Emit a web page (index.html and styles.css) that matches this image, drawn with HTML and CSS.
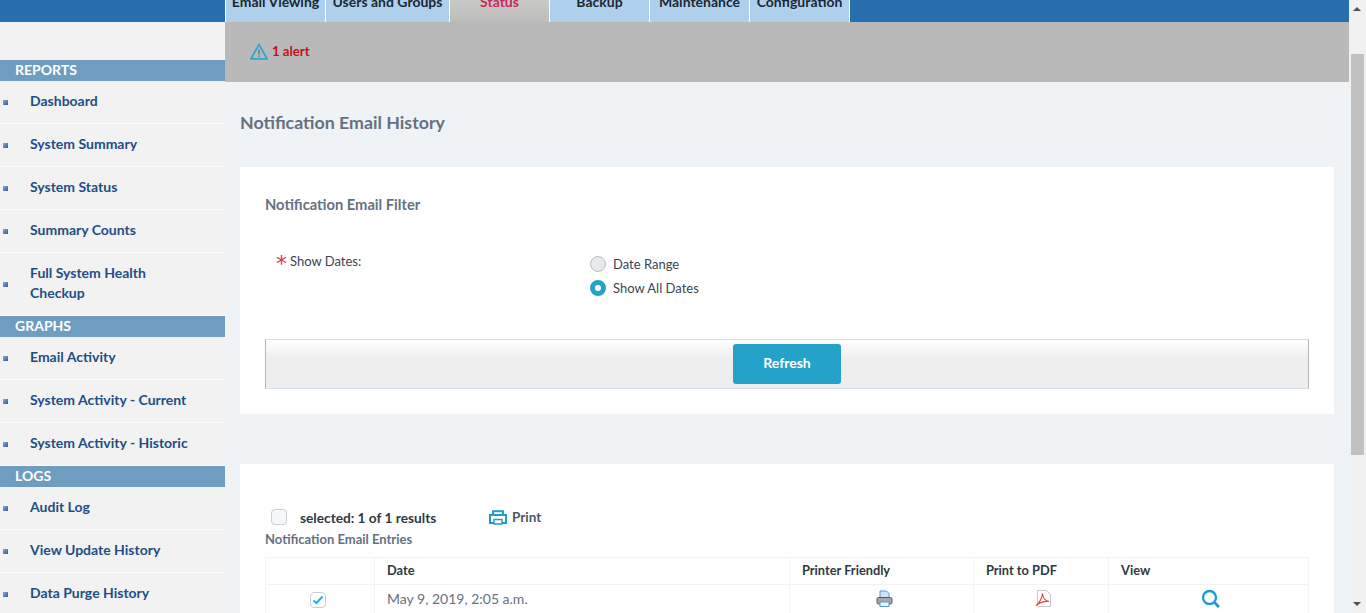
FILE: index.html
```html
<!DOCTYPE html>
<html>
<head>
	<title>Notification Email History</title>
	<link rel="stylesheet" href="styles.css">
</head>
<body>
<div class="app">
	<div class="page">
		<div class="topbar">
			<a class="tab">Email Viewing</a>
			<a class="tab tab-wide">Users and Groups</a>
			<a class="tab tab-active">Status</a>
			<a class="tab">Backup</a>
			<a class="tab">Maintenance</a>
			<a class="tab">Configuration</a>
		</div>
		<div class="layout">
			<div class="sidebar">
				<div class="side-head">REPORTS</div>
				<a class="side-item">Dashboard</a>
				<a class="side-item">System Summary</a>
				<a class="side-item">System Status</a>
				<a class="side-item">Summary Counts</a>
				<a class="side-item">Full System Health<br>Checkup</a>
				<div class="side-head">GRAPHS</div>
				<a class="side-item">Email Activity</a>
				<a class="side-item">System Activity - Current</a>
				<a class="side-item">System Activity - Historic</a>
				<div class="side-head">LOGS</div>
				<a class="side-item">Audit Log</a>
				<a class="side-item">View Update History</a>
				<a class="side-item">Data Purge History</a>
			</div>
			<div class="main">
				<div class="alert-bar">
					<svg class="alert-icon" width="18" height="17" viewBox="0 0 18 17">
						<path d="M9 1.5 L17 15.8 H1 Z" fill="none" stroke="#2ea6cf" stroke-width="1.7"/>
						<path d="M9 6.5 V11.5 M9 12.5 V14" stroke="#3b6f8a" stroke-width="1.2"/>
					</svg>
					<span class="alert-text">1 alert</span>
				</div>
				<h1 class="page-title">Notification Email History</h1>
				<div class="card card-filter">
					<h2 class="card-title">Notification Email Filter</h2>
					<div class="form-row">
						<div class="form-label"><span class="required">*</span>Show Dates:</div>
						<div class="radio-list">
							<label class="radio-row"><span class="radio"></span>Date Range</label>
							<label class="radio-row"><span class="radio radio-on"></span>Show All Dates</label>
						</div>
					</div>
					<div class="button-bar"><button class="refresh">Refresh</button></div>
				</div>
				<div class="card card-entries">
					<div class="select-row">
						<span class="check"></span>
						<span class="select-text">selected: 1 of 1 results</span>
						<a class="print-link">
							<svg width="18" height="15" viewBox="0 0 18 15">
								<path d="M4 5 V1.2 H14 V5" fill="none" stroke="#1f9dc8" stroke-width="2"/>
								<path d="M1 5 H17 V13 H1 Z" fill="none" stroke="#1f9dc8" stroke-width="2"/>
								<path d="M5 9.5 H13 V14 H5 Z" fill="#fff" stroke="#1f9dc8" stroke-width="1.4"/>
							</svg>
							Print
						</a>
					</div>
					<div class="entries-title">Notification Email Entries</div>
					<table class="entries">
						<colgroup>
							<col class="col-check"><col class="col-date"><col class="col-friendly"><col class="col-pdf"><col>
						</colgroup>
						<tr class="head-row">
							<th></th><th>Date</th><th>Printer Friendly</th><th>Print to PDF</th><th>View</th>
						</tr>
						<tr>
							<td class="cell-center">
								<span class="check check-on">
									<svg width="12" height="10" viewBox="0 0 12 10"><path d="M1.5 5.5 L4.5 8 L10.5 1.5" fill="none" stroke="#22b1ec" stroke-width="2"/></svg>
								</span>
							</td>
							<td class="cell-date">May 9, 2019, 2:05 a.m.</td>
							<td class="cell-center cell-friendly">
								<svg width="17" height="18" viewBox="0 0 17 18">
									<path d="M4 8 V1 H10.5 L13 3.5 V8" fill="#cfe2f6" stroke="#5d93d1"/>
									<rect x="1" y="7.5" width="15" height="6.5" rx="1.5" fill="#a4a8ad" stroke="#55595e"/>
									<rect x="4" y="12" width="9" height="4.5" fill="#eef4fb" stroke="#5d93d1"/>
								</svg>
							</td>
							<td class="cell-center cell-pdf">
								<svg width="17" height="18" viewBox="0 0 17 18">
									<path d="M2.5 .5 H11.5 L15.5 4.5 V16.5 H2.5 Z" fill="#fff" stroke="#c9c9c9"/>
									<path d="M1 15.5 C4 14 7 8 7.5 3.5 C8 8 10 11 14 11.5 C10 11 5 12.5 1 15.5 Z" fill="none" stroke="#e2443f" stroke-width="1.1"/>
								</svg>
							</td>
							<td class="cell-view">
								<svg width="20" height="20" viewBox="0 0 20 20">
									<circle cx="8.5" cy="8.5" r="6.5" fill="none" stroke="#1f9dc8" stroke-width="2.4"/>
									<path d="M13 13 L18 18" stroke="#1f9dc8" stroke-width="2.8"/>
								</svg>
							</td>
						</tr>
					</table>
				</div>
			</div>
		</div>
	</div>
	<div class="scrollbar">
		<div class="arrow arrow-up"></div>
		<div class="thumb"></div>
		<div class="arrow arrow-down"></div>
	</div>
</div>
</body>
</html>
```

FILE: styles.css
```css
* {
    box-sizing: border-box;
}
body {
    margin: 0;
    font-family: "Lato", "Open Sans", Arial, sans-serif;
    font-size: 14px;
    color: #3a4552;
}
.app {
    display: flex;
    height: 613px;
    overflow: hidden;
}
.page {
    flex: 1;
    min-width: 0;
}
.topbar {
    display: flex;
    height: 22px;
    padding-left: 225px;
    background-color: #296eae;
}
.tab {
    width: 100px;
    height: 22px;
    overflow: hidden;
    border-left: 1px solid #fff;
    background-color: #aed0ec;
    color: #1c2733;
    font-weight: 700;
    font-size: 14px;
    line-height: 3px;
    text-align: center;
}
.tab-wide {
    width: 124px;
}
.tab-active {
    background: linear-gradient(#c9c9c7, #bcbcbc);
    color: #c8285a;
}
.topbar .tab:last-child {
    border-right: 1px solid #fff;
    width: 101px;
}
.layout {
    display: flex;
    height: 591px;
}
.sidebar {
    width: 225px;
    flex-shrink: 0;
    padding-top: 38px;
    background-color: #f2f2f2;
}
.side-head {
    height: 21px;
    padding-left: 15px;
    background-color: #6f9dbf;
    color: #fff;
    font-weight: 700;
    font-size: 14px;
    line-height: 19px;
}
.side-item {
    display: block;
    position: relative;
    padding: 10px 10px 12px 30px;
    border-bottom: 1px solid #fafafa;
    color: #1f4e85;
    font-weight: 700;
    font-size: 14px;
    line-height: 20px;
}
.side-item::before {
    content: "";
    position: absolute;
    left: 3px;
    top: 50%;
    width: 5px;
    height: 5px;
    margin-top: -2px;
    background: linear-gradient(135deg, #8fa9cc, #2d5c9e);
}
.main {
    flex: 1;
    min-width: 0;
    background-color: #eff3f6;
}
.alert-bar {
    display: flex;
    align-items: center;
    height: 60px;
    padding: 0 0 2px 25px;
    background-color: #b9b9b9;
}
.alert-icon {
    margin-right: 4px;
}
.alert-text {
    color: #c40f1e;
    font-weight: 700;
    font-size: 13.2px;
}
.page-title {
    margin: 0;
    padding: 29px 15px 0;
    height: 85px;
    color: #66717f;
    font-size: 17.8px;
    font-weight: 700;
    line-height: 22px;
}
.card {
    margin: 0 15px;
    background-color: #fff;
}
.card-filter {
    height: 247px;
    padding: 28px 25px 0;
    margin-bottom: 50px;
}
.card-title {
    margin: 0;
    color: #66717f;
    font-size: 14.7px;
    font-weight: 700;
    line-height: 18px;
}
.form-row {
    display: flex;
    height: 126px;
    padding-top: 39px;
}
.form-label {
    display: flex;
    width: 325px;
    padding-left: 11px;
    font-size: 13px;
    line-height: 18px;
}
.required {
    width: 14px;
    color: #e8284f;
    font-family: "DejaVu Sans", sans-serif;
    font-size: 22px;
    line-height: 24px;
}
.radio-list {
    padding-top: 0;
}
.radio-row {
    display: flex;
    align-items: center;
    height: 24px;
    font-size: 13px;
}
.radio {
    width: 16px;
    height: 16px;
    margin-right: 7px;
    border: 1px solid #b9bfc9;
    border-radius: 50%;
    background-color: #e8e9ec;
}
.radio-on {
    border: 5px solid #25a2c9;
    background-color: #fff;
}
.button-bar {
    display: flex;
    justify-content: center;
    align-items: center;
    height: 50px;
    border: 1px solid #d6e0ea;
    border-left-color: #b5b5b5;
    border-right-color: #b5b5b5;
    background: linear-gradient(#fff, #eeeeee 40%);
}
.refresh {
    width: 108px;
    height: 40px;
    padding: 0 0 3px;
    border: none;
    border-radius: 3px;
    background-color: #25a2c9;
    color: #fff;
    font-family: inherit;
    font-weight: 700;
    font-size: 14px;
}
.card-entries {
    height: 200px;
    padding: 1px 25px 0;
}
.select-row {
    display: flex;
    align-items: center;
    height: 20px;
    margin-top: 42px;
    padding-left: 6px;
}
.check {
    display: flex;
    justify-content: center;
    align-items: center;
    width: 16px;
    height: 16px;
    border: 1px solid #c9ced8;
    border-radius: 4px;
    background-color: #f6f7f9;
}
.check-on {
    display: inline-flex;
    vertical-align: middle;
    margin-right: 4px;
    background-color: #fff;
}
.select-text {
    margin-left: 13px;
    width: 189px;
    color: #2f3844;
    font-weight: 700;
    font-size: 13.7px;
}
.print-link {
    display: flex;
    align-items: center;
    gap: 5px;
    color: #4a5666;
    font-weight: 700;
    font-size: 13.5px;
}
.entries-title {
    margin-top: 3px;
    height: 19px;
    color: #66717f;
    font-weight: 700;
    font-size: 13px;
    line-height: 18px;
}
.entries {
    width: 1044px;
    margin-top: 8px;
    border-collapse: collapse;
    table-layout: fixed;
}
.col-check {
    width: 109px;
}
.col-date {
    width: 415px;
}
.col-friendly {
    width: 184px;
}
.col-pdf {
    width: 135px;
}
.entries th,
.entries td {
    height: 27px;
    padding: 0 12px;
    border: 1px solid #f1f3f5;
    text-align: left;
    font-size: 12.8px;
}
.entries th {
    padding-bottom: 3px;
    color: #2f3844;
    font-weight: 700;
}
.entries td {
    height: 29px;
    color: #66717f;
    font-size: 14px;
}
.entries td.cell-date {
    padding-bottom: 2px;
}
.entries svg {
    display: block;
}
.entries td.cell-center {
    text-align: center;
}
.cell-friendly svg {
    margin-left: 74px;
}
.cell-pdf svg {
    margin-left: 49px;
}
.cell-view svg {
    margin-left: 80px;
}
.scrollbar {
    position: relative;
    width: 17px;
    flex-shrink: 0;
    background-color: #f1f1f1;
}
.thumb {
    position: absolute;
    left: 2px;
    top: 54px;
    width: 13px;
    height: 401px;
    background-color: #c1c1c1;
}
.arrow {
    position: absolute;
    left: 4px;
    width: 0;
    height: 0;
    border-left: 4px solid transparent;
    border-right: 4px solid transparent;
}
.arrow-up {
    top: 7px;
    border-bottom: 4px solid #505050;
}
.arrow-down {
    bottom: 7px;
    border-top: 4px solid #505050;
}
```
